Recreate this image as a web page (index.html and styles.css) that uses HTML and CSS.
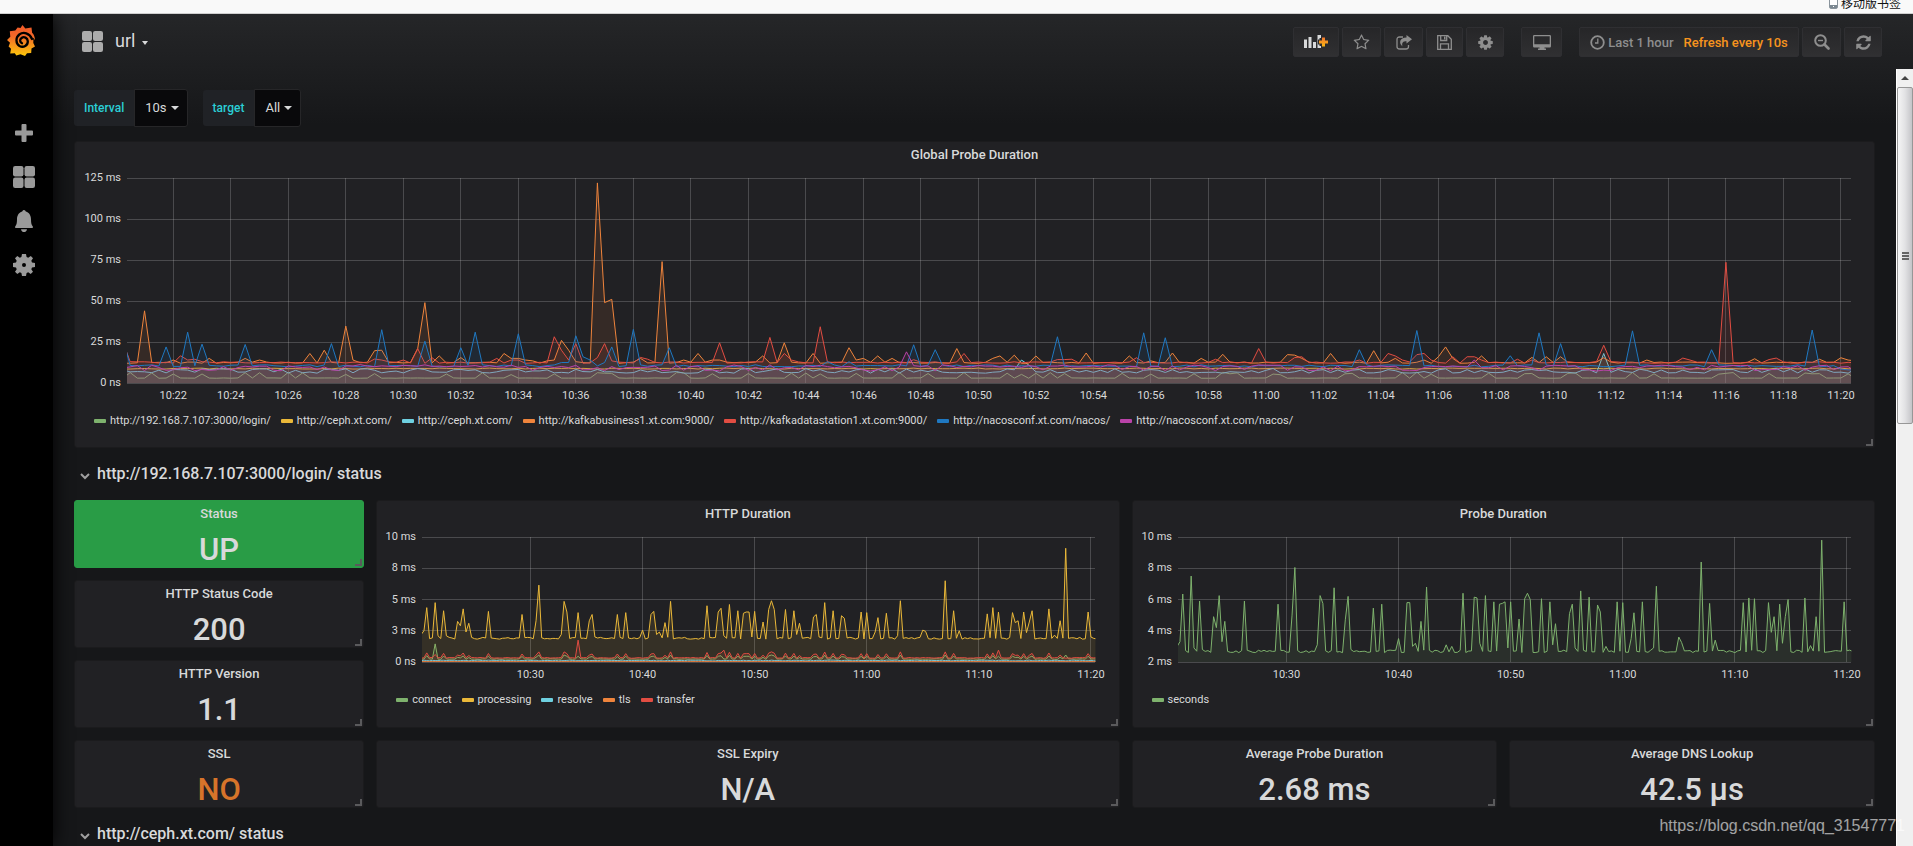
FILE: index.html
```html
<!DOCTYPE html>
<html lang="en">
<head>
<meta charset="utf-8">
<title>Grafana - url</title>
<link rel="stylesheet" href="styles.css">
</head>
<body>
<svg class="defs" width="0" height="0" aria-hidden="true">
  <defs>
    <linearGradient id="sun" x1="0" y1="0" x2="0" y2="1"><stop offset="0" stop-color="#f05a28"/><stop offset=".35" stop-color="#f2672a"/><stop offset="1" stop-color="#fcc80b"/></linearGradient>
    <linearGradient id="plus" x1="0" y1="0" x2="0" y2="1"><stop offset="0" stop-color="#f2762e"/><stop offset="1" stop-color="#fcb813"/></linearGradient>
    <symbol id="i-apps" viewBox="0 0 22 22"><rect width="10.500" height="10.500" rx="2.200"/><rect x="11.500" width="10.500" height="10.500" rx="2.200"/><rect y="11.500" width="10.500" height="10.500" rx="2.200"/><rect x="11.500" y="11.500" width="10.500" height="10.500" rx="2.200"/></symbol>
    <symbol id="i-cog" viewBox="0 0 1792 1792"><path d="M1152 896q0-106-75-181t-181-75-181 75-75 181 75 181 181 75 181-75 75-181zm512-109v222q0 12-8 23t-20 13l-185 28q-19 54-39 91 35 50 107 138 10 12 10 25t-9 23q-27 37-99 108t-94 71q-12 0-26-9l-138-108q-44 23-91 38-16 136-29 186-7 28-36 28h-222q-14 0-24.500-8.500t-11.500-21.500l-28-184q-49-16-90-37l-141 107q-10 9-25 9-14 0-25-11-126-114-165-168-7-10-7-23 0-12 8-23 15-21 51-66.500t54-70.500q-27-50-41-99l-183-27q-13-2-21-12.500t-8-23.500v-222q0-12 8-23t19-13l186-28q14-46 39-92-40-57-107-138-10-12-10-24 0-10 9-23 26-36 98.500-107.500t94.500-71.500q13 0 26 10l138 107q44-23 91-38 16-136 29-186 7-28 36-28h222q14 0 24.500 8.500t11.500 21.500l28 184q49 16 90 37l142-107q9-9 24-9 13 0 25 10 129 119 165 170 7 8 7 22 0 12-8 23-15 21-51 66.500t-54 70.500q26 50 41 98l183 28q13 2 21 12.500t8 23.500z"/></symbol>
  </defs>
</svg>

<div class="browser-bar">
  <svg width="9" height="12" viewBox="0 0 9 12"><rect x=".5" y=".5" width="8" height="11" rx="1.500" fill="#fff" stroke="#8a949c"/><rect x="1" y="8" width="7" height="3" fill="#7c8891"/><rect x="4" y="9" width="1" height="1" fill="#fff"/></svg>
  <span lang="zh">移动版书签</span>
</div>

<div class="app">
  <nav class="sidemenu" aria-label="Main menu">
    <a href="#" class="logo" aria-label="Home">
      <svg width="28" height="31" viewBox="0 0 28 31"><path fill="url(#sun)" d="M15.500 0l2.800 3.600 6.200-1.100.6 5.300q2.600 2.400 2.900 7.400-1-2-2.400-2.700 1.300 2.400.7 5.500l1.700 3.500-3.500 2-.3 4.500-4.200.3-2 2.700-4.500-1.800-4.200 1.200-1.500-2.200-4.600.2.800-4.700L1.600 21.500 3 17.800 0 15l3.300-3.200-.5-5.500 5.500-.9 2.300-3 2.900.6z"/><path d="M25 14C22.500 8 16.500 6.500 12.300 9.500 8.500 12.500 8.500 18.500 12.500 21c4 2 8.500-.5 8.300-4.800-.3-3.500-3.800-5-6.200-3.200-2.200 1.600-1.800 4.200.4 5.200" fill="none" stroke="#000" stroke-width="2.300" stroke-linecap="round"/></svg>
    </a>
    <a href="#" class="item" aria-label="Create"><svg width="18" height="18" viewBox="0 0 18 18"><path d="M7.500 0h3q1 0 1 1v5.500H17q1 0 1 1v3q0 1-1 1h-5.500V17q0 1-1 1h-3q-1 0-1-1v-5.500H1q-1 0-1-1v-3q0-1 1-1h5.500V1q0-1 1-1z"/></svg></a>
    <a href="#" class="item" aria-label="Dashboards"><svg width="22" height="22"><use href="#i-apps"/></svg></a>
    <a href="#" class="item" aria-label="Alerting"><svg width="18" height="22" viewBox="0 0 18 22"><path d="M9 0q1.500 0 1.800 1.600C14.500 2.600 16 6 16 9.500c0 4 .6 5.500 1.800 7 .4.800.2 1.500-.7 1.500H.9c-.9 0-1.100-.7-.7-1.500C1.400 15 2 13.500 2 9.500 2 6 3.500 2.600 7.200 1.600 7.500 0 9 0 9 0zM6 19.200h6Q11.500 22 9 22t-3-2.800z"/></svg></a>
    <a href="#" class="item" aria-label="Configuration"><svg width="22" height="22" viewBox="0 0 22 22"><path fill-rule="evenodd" d="M9 0h4l.6 3 1.600.7L17.800 2 20 4.300l-1.700 2.500.7 1.600 3 .6v4l-3 .6-.7 1.600 1.700 2.600-2.300 2.200-2.500-1.700-1.600.7-.6 3H9l-.6-3-1.600-.7L4.300 20 2 17.800l1.700-2.600L3 13.600 0 13V9l3-.6.7-1.600L2 4.300 4.300 2l2.500 1.700L8.400 3zM11 9a2 2 0 1 0 0 4 2 2 0 0 0 0-4z"/></svg></a>
  </nav>

  <div class="main">
    <header class="navbar">
      <button class="title" type="button"><svg width="21" height="21"><use href="#i-apps"/></svg><span>url</span><i class="caret small"></i></button>
      <div class="tools">
        <button class="btn w46" type="button" aria-label="Add panel"><svg width="24" height="14" viewBox="0 0 24 14"><g fill="#d8d9da"><path d="M0 4.500h3V13H0zM4.500 2h3v11h-3zM9 7h3v6H9zM13.500 0H17v3h-1.500v1.500H14v5h1.500V11H17v2h-3.500z"/></g><path fill="url(#plus)" d="M18 2.500h3V5.500h3v3h-3v3h-3v-3h-3v-3h3z"/></svg></button>
        <button class="btn w39" type="button" aria-label="Mark as favorite"><svg width="17" height="17" viewBox="0 0 1792 1792"><path d="M1201 1004l306-297-422-62-189-382-189 382-422 62 306 297-73 421 378-199 377 199zm527-357q0 22-26 48l-363 354 86 500q1 7 1 20 0 50-41 50-19 0-40-12l-449-236-449 236q-22 12-40 12-21 0-31.500-14.500t-10.500-35.500q0-6 2-20l86-500-364-354q-25-27-25-48 0-37 56-46l502-73 225-455q19-41 49-41t49 41l225 455 502 73q56 9 56 46z"/></svg></button>
        <button class="btn w39" type="button" aria-label="Share dashboard"><svg width="16" height="15" viewBox="0 0 16 15"><path d="M7 2H3.500Q1 2 1 4.500v7Q1 14 3.500 14h6.500q2.500 0 2.500-2.500V10" fill="none" stroke="#8e8e8e" stroke-width="1.300"/><path d="M10.500 0L16 4.300l-5.500 4.300V6.200C7 6.200 5.500 7.500 6.500 11.500 2.500 8 3.500 2.600 10.500 2.500z"/></svg></button>
        <button class="btn w37" type="button" aria-label="Save dashboard"><svg width="15" height="15" viewBox="0 0 15 15" fill="none" stroke="#8e8e8e" stroke-width="1.300"><path d="M.7.700h10.100l3.500 3.500v10.100H.7zM3.500 14V8.800h8V14M3.700 1v4.500h6V1"/><path d="M7 1.500h1.500v3H7z" fill="#8e8e8e" stroke="none"/></svg></button>
        <button class="btn w38" type="button" aria-label="Settings"><svg width="17" height="17"><use href="#i-cog"/></svg></button>
        <button class="btn w41 gap" type="button" aria-label="Cycle view mode"><svg width="18" height="15" viewBox="0 0 18 15"><path fill-rule="evenodd" d="M1.200 0h15.600Q18 0 18 1.200v10q0 1.300-1.200 1.300H11.500v1h1.500V15H5v-1.500h1.500v-1H1.200Q0 12.500 0 11.200v-10Q0 0 1.200 0zM1.300 1.300v7.900h15.400V1.300z"/></svg></button>
        <button class="btn time gap" type="button"><svg width="15" height="15" viewBox="0 0 15 15" fill="none" stroke="#8e8e8e" stroke-width="1.800"><circle cx="7.500" cy="7.500" r="6.300"/><path d="M7.800 3.500v4.500H5" stroke-width="1.300"/></svg><span>Last 1 hour</span><span class="refresh">Refresh every 10s</span></button>
        <button class="btn w39" type="button" aria-label="Zoom out"><svg width="16" height="16" viewBox="0 0 16 16" fill="none" stroke="#8e8e8e"><circle cx="6.500" cy="6.500" r="5.300" stroke-width="2"/><path d="M10.500 10.500l4 4" stroke-width="2.600" stroke-linecap="round"/><path d="M4 6.500h5" stroke-width="1.400"/></svg></button>
        <button class="btn w38" type="button" aria-label="Refresh"><svg width="17" height="17" viewBox="0 0 1792 1792"><path d="M1639 1056q0 5-1 7-64 268-268 434.500t-478 166.500q-146 0-282.500-55t-243.500-157l-129 129q-19 19-45 19t-45-19-19-45v-448q0-26 19-45t45-19h448q26 0 45 19t19 45-19 45l-137 137q71 66 161 102t187 36q134 0 250-65t186-179q11-17 53-117 8-23 30-23h192q13 0 22.500 9.500t9.500 22.500zm25-800v448q0 26-19 45t-45 19h-448q-26 0-45-19t-19-45 19-45l138-138q-148-137-349-137-134 0-250 65t-186 179q-11 17-53 117-8 23-30 23h-199q-13 0-22.500-9.500t-9.500-22.500v-7q65-268 270-434.500t480-166.500q146 0 284 55.500t245 156.500l130-129q19-19 45-19t45 19 19 45z"/></svg></button>
      </div>
    </header>

    <div class="scroll-row">
      <main class="dashboard">
        <div class="variables">
          <div class="variable"><span class="var-name" id="v-int">Interval</span><button type="button" aria-labelledby="v-int">10s<i class="caret"></i></button></div>
          <div class="variable"><span class="var-name" id="v-tgt">target</span><button type="button" aria-labelledby="v-tgt">All<i class="caret"></i></button></div>
        </div>

        <section class="panel">
          <h2>Global Probe Duration</h2>
          <div class="chart tall" id="global"></div>
          <ul class="legend">
            <li class="green">http://192.168.7.107:3000/login/</li>
            <li class="yellow">http://ceph.xt.com/</li>
            <li class="cyan">http://ceph.xt.com/</li>
            <li class="orange">http://kafkabusiness1.xt.com:9000/</li>
            <li class="red">http://kafkadatastation1.xt.com:9000/</li>
            <li class="blue">http://nacosconf.xt.com/nacos/</li>
            <li class="purple">http://nacosconf.xt.com/nacos/</li>
          </ul>
        </section>

        <button class="row-title" type="button"><svg width="10" height="7" viewBox="0 0 10 7"><path d="M1 1l4 4 4-4"/></svg>http://192.168.7.107:3000/login/ status</button>

        <div class="grid">
          <section class="panel stat up"><h2>Status</h2><p>UP</p></section>
          <section class="panel wide http">
            <h2>HTTP Duration</h2>
            <div class="chart" id="http"></div>
            <ul class="legend"><li class="green">connect</li><li class="yellow">processing</li><li class="cyan">resolve</li><li class="orange">tls</li><li class="red">transfer</li></ul>
          </section>
          <section class="panel wide probe">
            <h2>Probe Duration</h2>
            <div class="chart" id="probe"></div>
            <ul class="legend"><li class="green">seconds</li></ul>
          </section>
          <section class="panel stat"><h2>HTTP Status Code</h2><p>200</p></section>
          <section class="panel stat"><h2>HTTP Version</h2><p>1.1</p></section>
          <section class="panel stat"><h2>SSL</h2><p class="warn">NO</p></section>
          <section class="panel stat c10"><h2>SSL Expiry</h2><p>N/A</p></section>
          <section class="panel stat c5"><h2>Average Probe Duration</h2><p>2.68 ms</p></section>
          <section class="panel stat c5"><h2>Average DNS Lookup</h2><p>42.5 µs</p></section>
        </div>

        <button class="row-title" type="button"><svg width="10" height="7" viewBox="0 0 10 7"><path d="M1 1l4 4 4-4"/></svg>http://ceph.xt.com/ status</button>
      </main>
      <div class="scrollbar" aria-hidden="true">
        <div class="arrow"><i></i></div>
        <div class="thumb"><i></i></div>
      </div>
    </div>
  </div>
</div>
<div class="watermark">https://blog.csdn.net/qq_31547771</div>
<script src="charts.js"></script>
</body>
</html>
```

FILE: styles.css
```css
* { box-sizing: border-box; }
body { margin: 0; height: 100vh; overflow: hidden; position: relative; display: flex; flex-direction: column; background: #161719; color: #d8d9da; font: 13px/20px Roboto, "Liberation Sans", sans-serif; }
button { font: inherit; color: inherit; background: none; border: 0; padding: 0; margin: 0; cursor: pointer; }
h2, p, ul { margin: 0; padding: 0; }
svg { display: block; flex: none; }
.defs { position: absolute; }

.browser-bar { position: relative; z-index: 2; flex: none; height: 14px; overflow: hidden; display: flex; justify-content: flex-end; align-items: flex-end; gap: 3px; padding: 0 12px 4px 0; background: #f9f9f9; border-bottom: 1px solid #cfcfcf; color: #111; font: 12px/12px "Noto Sans CJK SC", sans-serif; }

.app { flex: 1; min-height: 0; display: flex; }
.sidemenu { flex: none; width: 53px; background: #000; box-shadow: 0 0 20px #000; z-index: 1; display: flex; flex-direction: column; align-items: center; padding: 11px 5px 0 0; }
.logo { margin: 0 6px 55px 0; }
.item { width: 44px; height: 44px; display: flex; align-items: center; justify-content: center; fill: #9a9a9a; }

.main { flex: 1; min-width: 0; display: flex; flex-direction: column; background: linear-gradient(#252628, #161719 110px); }
.navbar { flex: none; height: 55px; display: flex; justify-content: space-between; padding: 13px 31px 0 29px; }
.title { height: 28px; display: flex; align-items: center; font-size: 18px; gap: 7px; fill: #acacac; }
.title span { margin-left: 5px; }
.caret { border: 4px solid transparent; border-top-color: currentColor; border-bottom: 0; }
.caret.small { border-width: 4px 3px 0; margin-top: 4px; }
.tools { display: flex; gap: 3px; }
.btn { height: 30px; display: flex; align-items: center; justify-content: center; border: 1px solid #2f2f32; border-radius: 2px; background: linear-gradient(#262628, #303032); color: #8e8e8e; fill: #8e8e8e; font-weight: 500; }
.w37 { width: 37px; }
.w38 { width: 38px; }
.w39 { width: 39px; }
.w41 { width: 41px; }
.w46 { width: 46px; }
.gap { margin-left: 14px; }
.time { width: 220px; gap: 3px; }
.time span { padding-top: 2px; }
.refresh { color: #f7941e; margin-left: 7px; }

.scroll-row { flex: 1; min-height: 0; display: flex; }
.dashboard { flex: 1; min-width: 0; overflow: hidden; padding: 19px 21px 0; }
.variables { display: flex; gap: 15px; height: 39px; margin-bottom: 14px; }
.variable { display: flex; align-items: center; }
.var-name { height: 36px; padding: 0 10px; line-height: 36px; background: #202226; border-radius: 3px 0 0 3px; color: #2bcfd6; font-weight: 500; font-size: 12px; }
.variable button { height: 38px; padding: 0 8px 0 10px; display: flex; align-items: center; gap: 4px; background: #09090b; border: 1px solid #262628; border-radius: 0 3px 3px 0; }

.panel { position: relative; background: #212124; border: 1px solid #1b1b1d; border-radius: 3px; }
.panel::after { content: ""; position: absolute; right: 1px; bottom: 1px; width: 5px; height: 5px; border: solid #5a5a5c; border-width: 0 2px 2px 0; }
.panel h2 { font-size: 13px; font-weight: 500; line-height: 26px; text-align: center; }
.chart { height: 125px; margin: 10px 23px 0 45px; }
.chart.tall { height: 205px; margin-left: 52px; }
.legend { list-style: none; display: flex; flex-wrap: wrap; gap: 0 10px; padding: 30px 19px 18px; font-size: 11px; line-height: 16px; }
.legend li { display: flex; align-items: center; gap: 4px; }
.legend li::before { content: ""; width: 12px; height: 4px; border-radius: 1px; background: var(--c); }
.green { --c: #7eb26d; }
.yellow { --c: #eab839; }
.cyan { --c: #6ed0e0; }
.orange { --c: #ef843c; }
.red { --c: #e24d42; }
.blue { --c: #1f78c1; }
.purple { --c: #ba43a9; }

.chart svg { overflow: visible; }
.chart .plot { overflow: hidden; }
.chart line { stroke: #c8c8c8; stroke-opacity: .25; shape-rendering: crispEdges; }
.chart text { fill: #d8d9da; font-size: 11px; }
.chart path { vector-effect: non-scaling-stroke; fill: none; stroke: var(--c); stroke-linejoin: round; }
.chart path.area { fill: var(--c); fill-opacity: .1; stroke: none; }

.row-title { display: flex; align-items: center; gap: 7px; height: 28px; margin: 12px 0; padding-left: 6px; font-size: 16px; font-weight: 500; }
.row-title svg { fill: none; stroke: #a0a0a0; stroke-width: 2; margin-top: 4px; }
.grid { display: grid; grid-template-columns: repeat(24, 1fr); grid-auto-rows: 68px; gap: 12px; }
.stat { grid-column: span 4; text-align: center; }
.stat p { font-size: 31px; font-weight: 500; line-height: 46px; height: 40px; }
.wide { grid-row: 1 / span 3; }
.http { grid-column: 5 / span 10; }
.probe { grid-column: 15 / span 10; }
.c10 { grid-column: span 10; }
.c5 { grid-column: span 5; }
.up { background: #299c46; border-color: #299c46; }
.warn { color: #d7742a; }

.scrollbar { flex: none; width: 17px; background: #f0f0f0; border-left: 1px solid #fff; }
.arrow { height: 18px; display: flex; align-items: center; justify-content: center; }
.arrow i { border: 4px solid transparent; border-top: 0; border-bottom-color: #444; }
.thumb { height: 337px; display: flex; align-items: center; justify-content: center; border: 1px solid #979797; border-radius: 2px; background: linear-gradient(90deg, #f5f5f5, #e2e2e4 50%, #c4c4c8); }
.thumb i { width: 7px; height: 8px; background: repeating-linear-gradient(#666 0 2px, transparent 2px 3px); }
.watermark { position: absolute; right: 8px; bottom: 9px; font: 16px/22px "Liberation Sans", sans-serif; color: #fff; opacity: .6; }
```

FILE: charts.js
```js
// Samples are taken every 15 s, index 0 = 10:20:15. Peaks are [index, value] pairs over a resting level.
var N = 242;

function random(seed) {
  return function () {
    seed = (seed * 16807) % 2147483647;
    return seed / 2147483647;
  };
}

function series(base, jitter, peaks, seed) {
  var r = random(seed), out = [];
  for (var i = 0; i < N; i++) out.push(base + (r() - 0.5) * jitter);
  peaks.forEach(function (p) { out[p[0]] = p[1]; });
  return out;
}

function bumps(base, jitter, height, chance, seed) {
  var r = random(seed), out = [];
  for (var i = 0; i < N; i++) out.push(base + (r() - 0.5) * jitter + (r() < chance ? height * (0.6 + 0.4 * r()) : 0));
  return out;
}

function draw(id, o) {
  var w = o.to - o.from, h = o.max - o.min, s = '<svg width="100%" height="100%">';
  var body = '';
  o.series.forEach(function (q) {
    var pts = q.data.map(function (v, i) { return i + ' ' + (o.max - v).toFixed(2); }).join('L');
    body += '<g class="' + q.color + '"><path class="area" d="M0 ' + h + 'L' + pts + 'L' + (N - 1) + ' ' + h + 'Z"/><path d="M' + pts + '"/></g>';
  });
  o.yLabels.forEach(function (t, i) {
    var y = i * 100 / (o.yLabels.length - 1);
    s += '<line x1="0" x2="100%" y1="' + y + '%" y2="' + y + '%"/><text x="-6" dy="3" y="' + y + '%" text-anchor="end">' + t + '</text>';
  });
  for (var k = o.first, m = o.minute; k <= o.to; k += o.step * 4, m += o.step) {
    var x = (k - o.from) / w * 100;
    var t = (10 + Math.floor(m / 60)) + ':' + ('0' + m % 60).slice(-2);
    s += '<line x1="' + x + '%" x2="' + x + '%" y1="0" y2="100%"/><text x="' + x + '%" y="100%" dy="16" text-anchor="middle">' + t + '</text>';
  }
  s += '<svg class="plot" width="100%" height="100%" preserveAspectRatio="none" viewBox="' + o.from + ' 0 ' + w + ' ' + h + '">' + body + '</svg></svg>';
  document.getElementById(id).innerHTML = s;
}

var orange = [[3,44],[7,14],[12,15],[17,15],[19,14],[26,18],[28,20],[31,34.7],[32,14],[35,19.7],[36,20],[41,21],[42,49],[44,16.5],[47,15.5],[53,18],[54,15],[55,15],[56,14],[57,13.5],[59,13.5],[60,14],[61,26],[62,20],[63,13],[66,122],[67,49],[68,51],[69,12],[72,15],[75,74],[78,14],[80,18],[82,14],[83,14],[89,16.5],[92,24.5],[96,18],[101,21.5],[102,14],[103,15],[105,16.5],[107,15],[116,21],[121,15],[122,16.5],[124,17],[127,16.5],[134,18.3],[140,16.5],[143,13.5],[146,18.3],[150,15],[153,17.5],[162,17.3],[163,17],[164,15],[168,18],[174,19.7],[177,15],[181,14],[183,16],[184,22],[185,15],[189,16.5],[196,15.6],[198,16],[200,16],[206,15.4],[212,14],[227,14.8],[236,14.5],[239,15.4],[240,14],[241,13.5]];
var red = [[0,25],[1,13],[8,16.6],[9,14],[10,14.5],[11,13],[35,14.6],[36,14],[39,14],[41,21],[42,12],[43,15.4],[52,15],[54,14],[55,14],[60,28.2],[61,20],[62,14],[63,24],[64,12],[66,15.5],[67,24],[68,13.5],[72,15.6],[73,14.5],[83,24.5],[90,27.8],[92,18],[93,14],[97,34.3],[110,14.2],[117,18],[130,14.3],[131,14.3],[132,14.5],[141,15.4],[152,14.5],[158,21],[163,15.5],[164,16],[172,14],[176,18],[177,16.5],[178,14],[180,17.3],[181,18],[182,14],[185,16],[187,16],[188,16],[189,14],[194,14.5],[196,14],[205,13],[206,23],[207,13],[217,15.2],[218,14],[223,73.6],[229,14.3],[230,15.2]];
var blue = [[0,27],[6,22],[9,31],[11,23.7],[17,23.5],[29,24],[36,32.5],[42,25.5],[47,21.5],[49,31],[55,30],[61,12.5],[62,12.5],[63,28.8],[64,16],[65,14],[67,12.5],[68,22],[71,32.7],[76,21.5],[98,13],[101,13],[110,23.3],[113,20.3],[130,28.2],[142,30.6],[145,27.6],[172,20.3],[180,32],[193,16.6],[197,30.6],[200,24],[210,31.8],[221,20.3],[235,32.3],[239,8.5],[240,8],[241,8]];
var cyan = bumps(6.5, 1, 2, 0.45, 41);
cyan[126] = 11; cyan[125] = 14; cyan[206] = 18;
var purple = bumps(7.8, 1, 3, 0.7, 57);
purple[109] = 19; purple[188] = 14;

draw('global', {
  from: 0.56, to: 240.4, min: 0, max: 125, first: 7, minute: 22, step: 2,
  yLabels: ['125 ms', '100 ms', '75 ms', '50 ms', '25 ms', '0 ns'],
  series: [
    { color: 'green', data: bumps(3, 0.2, 3.6, 0.25, 11) },
    { color: 'yellow', data: series(8.8, 0.6, [], 23) },
    { color: 'cyan', data: cyan },
    { color: 'orange', data: series(12.4, 0.8, orange, 31) },
    { color: 'red', data: series(12.5, 0.9, red, 37) },
    { color: 'blue', data: series(10.5, 1.3, blue, 43) },
    { color: 'purple', data: purple }
  ]
});

var processing = [[0,2.2],[1,2.5],[2,4.35],[5,4.75],[6,2.1],[8,4.1],[9,2.1],[13,3.25],[14,2.9],[15,4.25],[16,2.4],[17,3.1],[24,4.05],[36,3.8],[41,3.3],[42,6.15],[50,2.2],[51,4.85],[52,4],[56,3.95],[60,3.3],[61,3.8],[62,2],[70,3.8],[73,3.95],[79,2.55],[82,3.8],[83,4.05],[84,2.2],[85,2.4],[87,3.15],[89,4.85],[102,4.5],[106,4],[107,4.3],[108,2.1],[110,4.6],[113,4.1],[115,3.9],[116,4],[117,4],[118,2],[119,4.05],[122,3.2],[124,4.2],[125,4.9],[126,4.2],[130,4.2],[133,4.1],[134,2.2],[135,3.1],[140,3.6],[141,3.8],[142,2],[144,4.75],[147,4.1],[150,3.7],[151,3.5],[157,4],[159,3.95],[162,2.4],[163,3.55],[166,3.9],[170,2.1],[171,4.9],[179,2.55],[180,2.45],[187,6.5],[190,4.1],[192,2.5],[202,3.85],[204,4.35],[206,4],[211,3.95],[212,3.15],[213,3.3],[215,4],[216,2.35],[217,3.2],[218,4.1],[224,4.25],[226,2.15],[228,3.3],[230,9.1],[238,4],[239,2]];
var lift = function (base, gain) {
  return processing.filter(function (p) { return p[1] > 2.8; }).map(function (p) { return [p[0], base + Math.min(p[1] - 1.8, 3) * gain]; });
};

draw('http', {
  from: 0.3, to: 240.6, min: 0, max: 10, first: 39, minute: 30, step: 10,
  yLabels: ['10 ms', '8 ms', '5 ms', '3 ms', '0 ns'],
  series: [
    { color: 'green', data: series(0.24, 0.04, lift(0.2, 0.12).concat([[5, 1.45]]), 3) },
    { color: 'yellow', data: series(1.9, 0.16, processing, 5) },
    { color: 'cyan', data: series(0.12, 0.06, [], 7) },
    { color: 'orange', data: series(0.03, 0, [], 9) },
    { color: 'red', data: series(0.33, 0.06, lift(0.3, 0.17).concat([[5, 0.6], [56, 1.75], [108, 0.95], [206, 0.95], [230, 0.3]]), 13) }
  ]
});

draw('probe', {
  from: 0.3, to: 240.6, min: 2, max: 10, first: 39, minute: 30, step: 10,
  yLabels: ['10 ms', '8 ms', '6 ms', '4 ms', '2 ms'],
  series: [
    { color: 'green', data: series(2.68, 0.16, [[0,3],[1,3.3],[2,6.35],[5,7.5],[6,2.9],[8,5.9],[9,2.8],[13,4.9],[14,4.2],[15,6.25],[16,3.3],[17,4.6],[24,5.9],[36,5.7],[41,5],[42,8.05],[50,3.1],[51,6.25],[52,5.75],[56,6.75],[60,4.7],[61,6.2],[62,2.8],[70,5.45],[73,5.7],[79,3.5],[82,5.8],[83,5.8],[84,3],[85,3.2],[87,4.6],[89,6.8],[96,3.1],[98,3],[102,6.4],[106,6.15],[107,6.1],[108,3.2],[110,6.25],[113,5.85],[115,5.7],[116,5.75],[117,5.85],[118,2.9],[119,5.85],[122,4.75],[124,6.05],[125,6.4],[126,6],[130,6.05],[133,5.85],[134,3.1],[135,4.45],[140,5.1],[141,5.7],[142,2.9],[144,6.55],[147,6.15],[150,5.65],[151,5.2],[153,3],[157,5.85],[159,5.8],[162,3.5],[163,5.15],[166,5.85],[170,2.9],[171,6.85],[179,3.6],[180,3.25],[187,8.4],[190,5.75],[192,3.4],[202,5.8],[204,6.1],[206,6.05],[211,5.8],[212,3.9],[213,4.9],[215,5.7],[216,3.2],[217,4.9],[218,6],[224,6.1],[226,3.05],[228,4.9],[230,9.8],[238,5.85]], 17) }
  ]
});
```
